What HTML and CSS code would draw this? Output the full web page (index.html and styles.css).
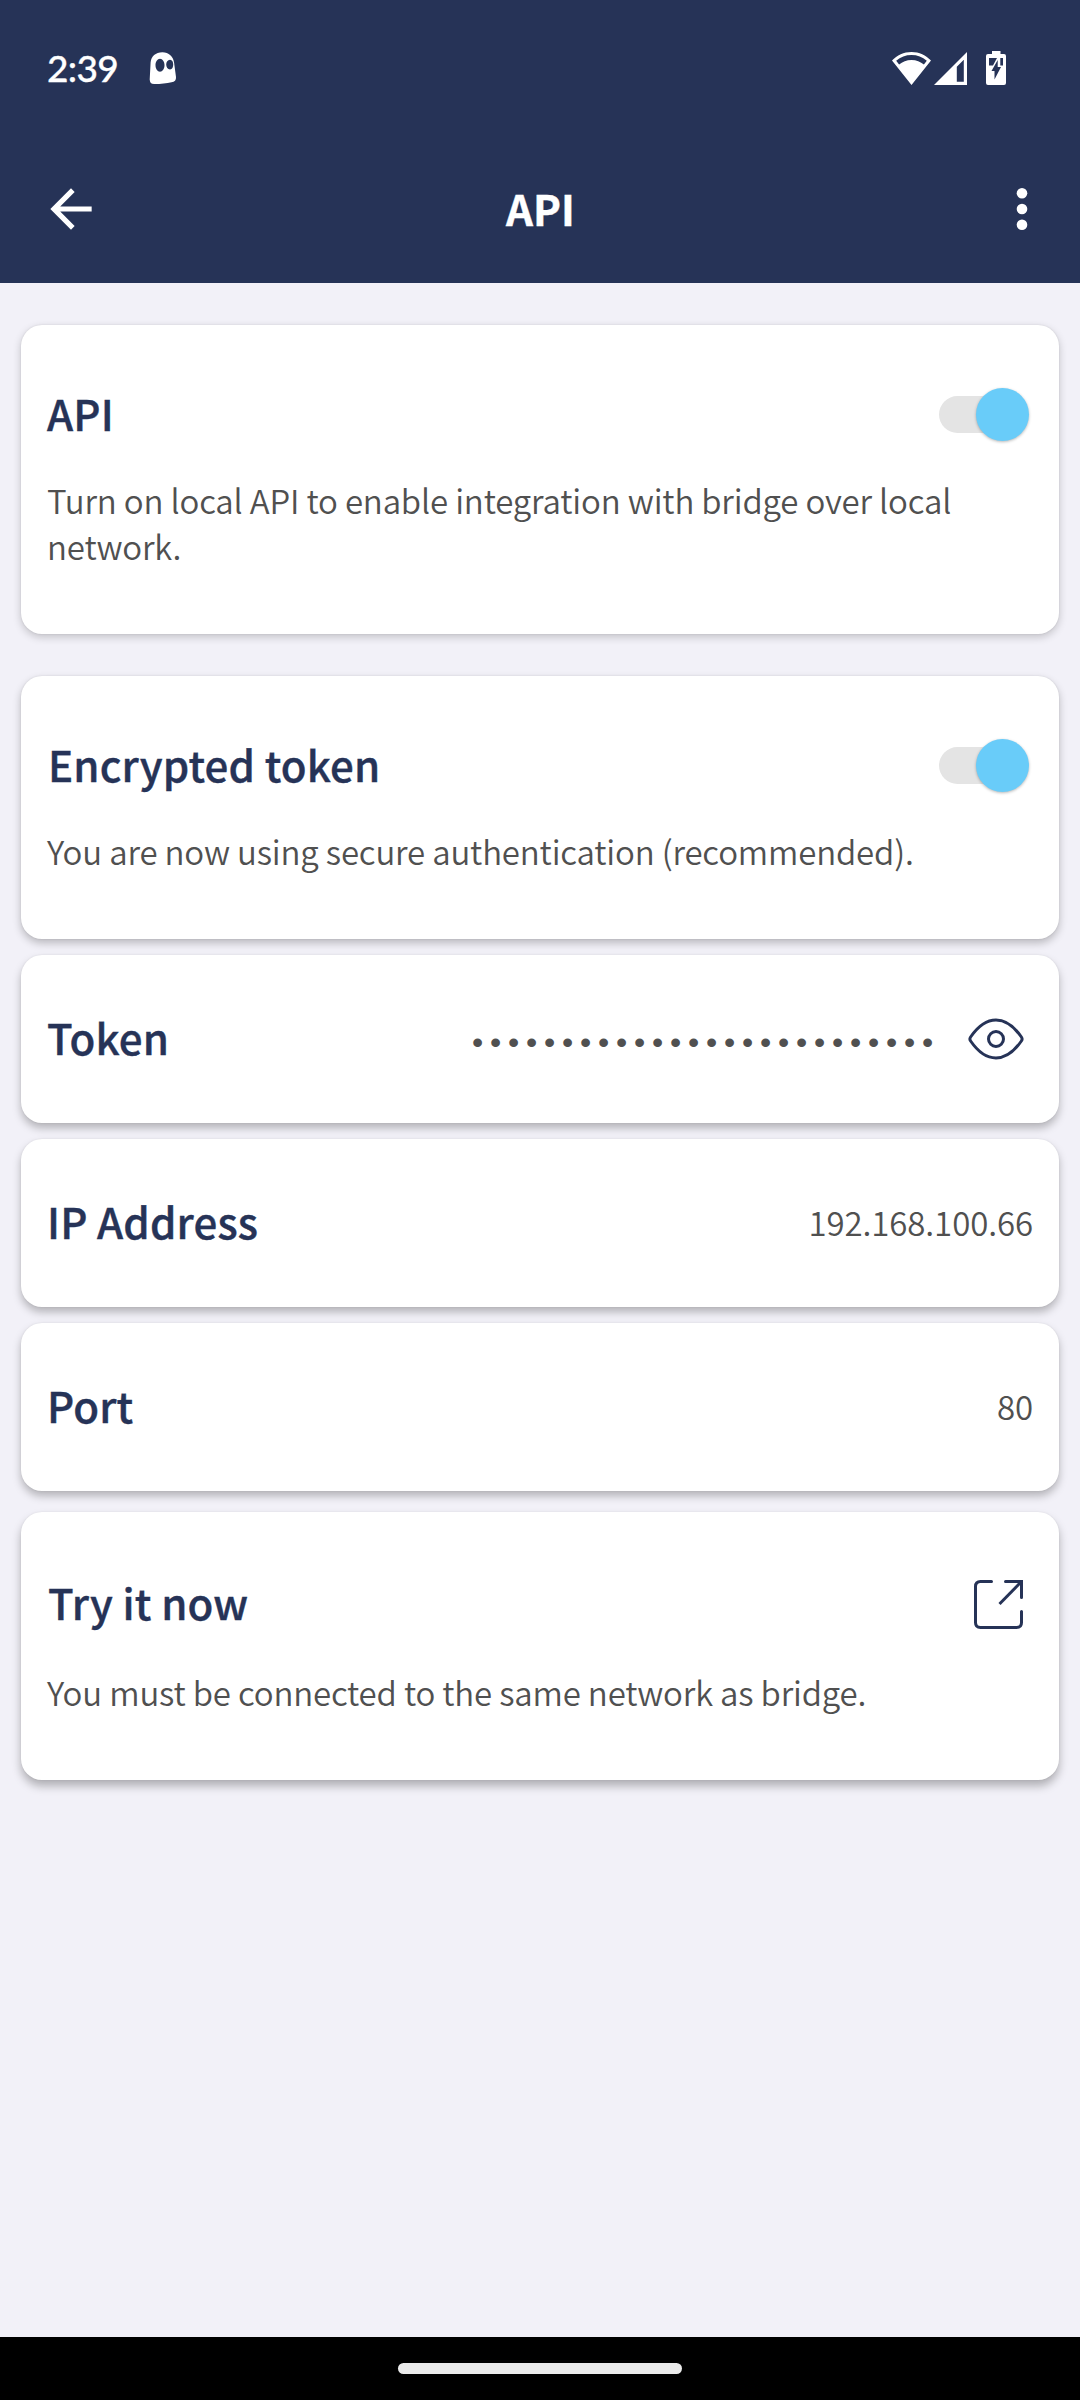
FILE: index.html
```html
<!DOCTYPE html>
<html lang="en">
<head>
<meta charset="utf-8">
<title>API</title>
<link rel="stylesheet" href="styles.css">
</head>
<body>
<div class="screen">
  <header class="header">
    <div class="status">
      <span class="time">2:39</span>
      <svg class="ghost" width="28" height="33" viewBox="0 0 28 33"><path fill="#fff" fill-rule="evenodd" d="M1.6 10.5C2.2 4.500 6.500.3 13.400.3c6.400 0 11 4.300 11.700 10.400l1.900 14.200c.3 3.200-1.300 4.700-4.500 5.400-5 1.200-10.500 1.700-17 1.800-3.400.1-4.600-1.300-4.800-4.500zM11 6.800c-2.600 0-4.500 3-4.500 6.500s1.900 6.500 4.500 6.500 4.500-3 4.500-6.500-1.900-6.500-4.500-6.500zm10 .9c-2.300 0-3.800 2.300-3.800 4.900s1.500 4.900 3.800 4.900 3.200-2.300 3.200-4.900-.9-4.900-3.200-4.900z"/></svg>
      <div class="signals">
        <svg width="39" height="33" viewBox="0 0 39 33"><path fill="#fff" fill-rule="evenodd" d="M0 8.600C5 3.300 11.800 0 19.500 0S34 3.300 39 8.600L19.500 33zM4.200 8.800l2.900 3.700C10.500 9.600 14.600 7.900 19.500 7.900s9 1.700 12.400 4.600l2.900-3.700C30.500 5.100 25.300 3.100 19.500 3.100S8.500 5.100 4.200 8.800z"/></svg>
        <svg class="cell" width="33" height="33" viewBox="0 0 33 33"><path fill="#fff" fill-rule="evenodd" d="M33 0v33H0zM29.800 7.800l-7 7v15h7z"/></svg>
        <svg class="battery" width="20" height="34" viewBox="0 0 20 34"><path fill="#fff" d="M6 0h8.500v3H18q2 0 2 2v27q0 2-2 2H2q-2 0-2-2V5q0-2 2-2h4z"/><path fill="#263357" d="M3 7h8L7 14.500H3zM14.300 7H17v7.500h-2.700zM11.700 9v7H15L8.500 28.500V20H5.500z"/></svg>
      </div>
    </div>
    <div class="appbar">
      <svg class="back" width="62" height="62" viewBox="0 0 24 24"><path fill="#fff" d="M20 11H7.830l5.590-5.590L12 4l-8 8 8 8 1.410-1.410L7.830 13H20z"/></svg>
      <h1 class="page-title">API</h1>
      <svg class="more" width="12" height="44" viewBox="0 0 12 44"><g fill="#fff"><circle cx="6" cy="6.300" r="5.300"/><circle cx="6" cy="22" r="5.300"/><circle cx="6" cy="37.700" r="5.300"/></g></svg>
    </div>
  </header>

  <main class="content">
    <section class="card card-api">
      <div class="row">
        <h2 class="title">API</h2>
        <div class="toggle"><div class="thumb"></div></div>
      </div>
      <p class="desc">Turn on local API to enable integration with bridge over local network.</p>
    </section>
    <section class="card card-encrypted">
      <div class="row">
        <h2 class="title title-inset">Encrypted token</h2>
        <div class="toggle"><div class="thumb"></div></div>
      </div>
      <p class="desc">You are now using secure authentication (recommended).</p>
    </section>
    <section class="card card-line card-token">
      <h2 class="title">Token</h2>
      <span class="dots">••••••••••••••••••••••••••</span>
      <svg class="eye" width="56" height="42" viewBox="0 0 56 42"><g fill="none" stroke="#263357" stroke-width="3"><path stroke-linejoin="round" d="M2.600 19C9.500 9 17 2 28 2s18.500 7 25.400 17q1.400 2 0 4C46.500 33 39 40 28 40S9.500 33 2.600 23q-1.400-2 0-4z"/><circle cx="28" cy="21" r="7.500"/></g></svg>
    </section>
    <section class="card card-line card-ip">
      <h2 class="title">IP Address</h2>
      <span class="value">192.168.100.66</span>
    </section>
    <section class="card card-line card-port">
      <h2 class="title">Port</h2>
      <span class="value">80</span>
    </section>
    <section class="card card-try">
      <div class="row">
        <h2 class="title title-inset">Try it now</h2>
        <svg class="open" width="49" height="49" viewBox="0 0 49 49"><g fill="none" stroke="#263357" stroke-width="3"><path stroke-linecap="round" d="M17.500 1.500h-11q-5 0-5 5v36q0 5 5 5h36q5 0 5-5V31.500M31.500 1.500h16v16"/><path d="M47 2L25.500 24"/></g></svg>
      </div>
      <p class="desc">You must be connected to the same network as bridge.</p>
    </section>
  </main>

  <footer class="navbar"><div class="home"></div></footer>
</div>
</body>
</html>
```
FILE: styles.css
```css
* { box-sizing: border-box; }
body { margin: 0; }
h1, h2, p { margin: 0; }
svg { display: block; flex: none; }

.screen {
  width: 1080px;
  height: 2400px;
  display: flex;
  flex-direction: column;
  background: #f2f1f8;
  font-family: "Noto Sans CJK SC", "Noto Sans", sans-serif;
  overflow: hidden;
}

/* Status bar and app bar */
.header { height: 283px; background: #263357; color: #fff; }
.status { height: 136px; display: flex; align-items: center; padding: 0 74px 0 47px; }
.time { width: 102px; font: 500 37px/40px Lato, sans-serif; letter-spacing: -.7px; -webkit-text-stroke: .3px #fff; }
.signals { display: flex; align-items: center; margin-left: auto; }
.cell { margin-left: 3px; }
.battery { margin-left: 19px; }
.appbar {
  height: 146px;
  display: grid;
  grid-template-columns: 62px 1fr 62px;
  align-items: center;
  padding: 0 27px 0 40px;
}
.page-title { padding: 0 12px 2px 0; text-align: center; font-size: 42px; font-weight: 700; line-height: 54px; -webkit-text-stroke: .4px #fff; }
.more { justify-self: end; margin-right: 25px; }

/* Cards */
.content { flex: 1; display: flex; flex-direction: column; padding: 42px 21px 0; }
.card {
  flex: none;
  border-radius: 21px;
  background: #fff;
  padding: 62px 26px 0;
  box-shadow: 0 3px 8px rgba(0, 0, 0, .2), 0 0 2px rgba(0, 0, 0, .1);
}
.card-api { height: 309px; }
.card-encrypted { height: 263px; margin-top: 42px; box-shadow: 0 4px 8px rgba(0, 0, 0, .24), 0 0 2px rgba(0, 0, 0, .1); }
.card-line { height: 168px; margin-top: 16px; padding-top: 0; display: flex; align-items: center; box-shadow: 0 5px 9px rgba(0, 0, 0, .26), 0 0 2px rgba(0, 0, 0, .08); }
.card-try { height: 268px; margin-top: 21px; padding-top: 65px; box-shadow: 0 6px 10px rgba(0, 0, 0, .28), 0 0 2px rgba(0, 0, 0, .08); }

.row { height: 55px; display: flex; align-items: center; justify-content: space-between; }
.title { color: #263357; font-size: 42px; font-weight: 500; line-height: 54px; letter-spacing: .15px; padding-bottom: 3px; white-space: nowrap; -webkit-text-stroke: .4px #263357; }
.title-inset { padding-left: 1px; }
.card-line .title { padding-bottom: 5px; }
.desc { margin-top: 35px; color: #505050; font-size: 33px; font-weight: 350; line-height: 46px; letter-spacing: -.17px; }
.card-try .desc { margin-top: 37px; }
.card-try .title { padding-bottom: 5px; }
.value { margin-left: auto; padding-bottom: 2px; color: #505050; font-size: 33px; font-weight: 350; line-height: 46px; letter-spacing: -.1px; }

.toggle { width: 87px; height: 37px; margin-right: 7px; border-radius: 19px; background: #e4e4e4; display: flex; align-items: center; justify-content: flex-end; }
.thumb { width: 53px; height: 53px; flex: none; margin-right: -3px; border-radius: 50%; background: #69ccf9; box-shadow: 0 1px 3px rgba(0, 0, 0, .28); }

.dots { margin-left: auto; padding-top: 5px; color: #505050; font: 32px/46px "Liberation Sans", sans-serif; letter-spacing: 6.8px; white-space: nowrap; }
.eye { margin: 0 9px 0 28px; }
.open { margin-right: 10px; }

/* Gesture navigation */
.navbar { height: 63px; background: #000; display: flex; justify-content: center; padding-top: 26px; }
.home { width: 284px; height: 11px; border-radius: 6px; background: #ebebeb; }
```
